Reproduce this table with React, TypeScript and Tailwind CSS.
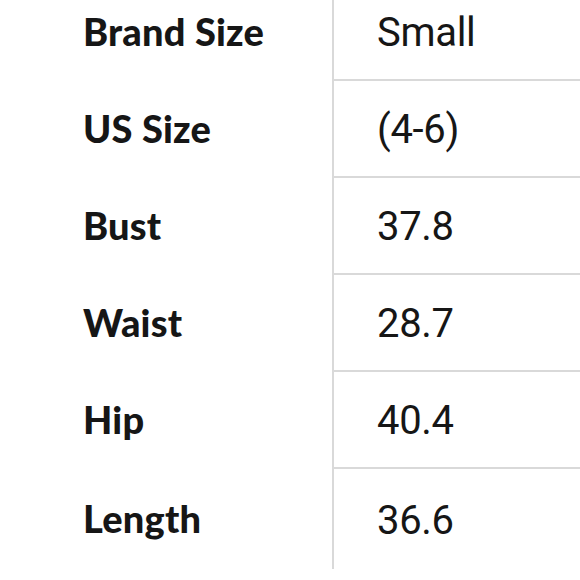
const rows: [string, string][] = [
  ["Brand Size", "Small"],
  ["US Size", "(4-6)"],
  ["Bust", "37.8"],
  ["Waist", "28.7"],
  ["Hip", "40.4"],
  ["Length", "36.6"],
];

export default function App() {
  return (
    <div className="h-[580px] w-[580px] overflow-hidden bg-white text-[#161616]">
      <div className="mt-[-16px] flex flex-col">
        {rows.map(([label, value], i) => {
          const last = i === rows.length - 1;
          return (
            <div key={label} className={`flex ${last ? "h-[100px]" : "h-[97px]"}`}>
              <div className="flex w-[332px] items-center pb-[2px] pl-[83px] font-['Lato',sans-serif] text-[38px] font-black tracking-[0.2px]">
                {label}
              </div>
              <div
                className={`flex flex-1 items-center border-l-2 border-[#d9d9d9] pl-[43px] pt-[3px] font-['Roboto',sans-serif] text-[40px] tracking-[-0.3px] ${
                  last ? "" : "border-b-2"
                }`}
              >
                {value}
              </div>
            </div>
          );
        })}
      </div>
    </div>
  );
}
